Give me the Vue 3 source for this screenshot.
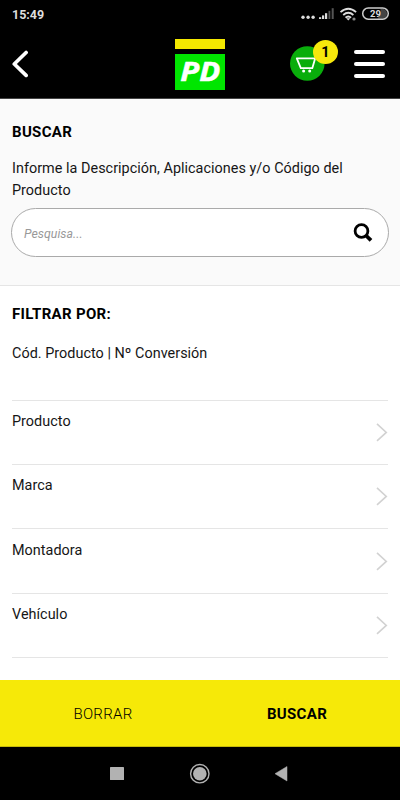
<script setup>
const filters = ['Producto', 'Marca', 'Montadora', 'Vehículo']
</script>

<template>
  <div class="screen">
    <div class="status">
      <span class="time">15:49</span>
      <svg class="indicators" width="92" height="20" viewBox="0 0 92 20">
        <g fill="#ddd">
          <circle cx="3" cy="11.3" r="1.7" /><circle cx="8.1" cy="11.3" r="1.7" /><circle cx="13.1" cy="11.3" r="1.7" />
          <rect x="19" y="11.2" width="2.2" height="1.8" /><rect x="22" y="9.4" width="2.2" height="3.6" />
          <rect x="25" y="7.2" width="2.2" height="5.8" />
        </g>
        <g fill="#555"><rect x="28.5" y="4.8" width="1.8" height="8.2" /><rect x="31.7" y="2.2" width="2" height="10.8" /></g>
        <g fill="none" stroke="#ddd" stroke-width="1.8">
          <path d="M40.5 6.2Q48.3-.8 56.1 6.2" /><path d="M43.2 9Q48.3 4.6 53.4 9" /><path d="M45.5 11.7Q48.3 9.2 51.1 11.7" />
        </g>
        <path d="M46.2 12.2H50.4L48.3 14.6Z" fill="#ddd" />
        <circle cx="54" cy="13" r="1.6" fill="#888" />
        <path d="M80.5 2.7H82A5 5 0 0 1 82 12.7H77.5Q81 8 80.5 2.7Z" fill="#444" />
        <rect x="62.7" y="2" width="25.6" height="11.2" rx="5.6" fill="none" stroke="#ccc" stroke-width="1.5" />
        <text x="75.5" y="11.2" text-anchor="middle" class="battery">29</text>
      </svg>
    </div>
    <header class="header">
      <svg class="back" width="18" height="30" viewBox="0 0 18 30"><path d="M14.1 3.5L2.3 15L14.1 26.4" fill="none" stroke="#fff" stroke-width="3.7" stroke-linecap="round" stroke-linejoin="round" /></svg>
      <div class="logo"><div class="logo-bar"></div><div class="logo-box"><svg width="50" height="36" viewBox="0 0 50 36"><text x="5.2" y="27" textLength="40" lengthAdjust="spacingAndGlyphs" class="logo-text">PD</text></svg></div></div>
      <div class="cart">
        <svg width="35" height="35" viewBox="0 0 35 35">
          <circle cx="17.3" cy="17.5" r="17.3" fill="#09ad0b" />
          <path d="M6.8 12.4H23.5M6.8 12.4L10.8 22.2H22.3L25.7 10.5H28" fill="none" stroke="#fff" stroke-width="1.8" stroke-linejoin="round" stroke-linecap="round" />
          <circle cx="13.6" cy="25" r="1.5" fill="#fff" /><circle cx="19.7" cy="25" r="1.5" fill="#fff" />
        </svg>
        <span class="badge">1</span>
      </div>
      <div class="burger"><i></i><i></i><i></i></div>
    </header>
    <section class="search">
      <h2>BUSCAR</h2>
      <p>Informe la Descripción, Aplicaciones y/o Código del Producto</p>
      <div class="field">
        <span class="placeholder">Pesquisa...</span>
        <svg width="20" height="20" viewBox="0 0 20 20" fill="none" stroke="#000"><circle cx="8.5" cy="8" r="6.4" stroke-width="2.8" /><path d="M13 12.5L18 17.3" stroke-width="3.8" /></svg>
      </div>
    </section>
    <main class="filters">
      <h2>FILTRAR POR:</h2>
      <div class="code">Cód. Producto | Nº Conversión</div>
      <div v-for="name in filters" :key="name" class="row">
        <span>{{ name }}</span>
        <svg width="12" height="20" viewBox="0 0 12 20"><path d="M1 1.8L10.3 10.4L1 18.8" fill="none" stroke="#d2d2d2" stroke-width="1.6" /></svg>
      </div>
      <div class="end"></div>
    </main>
    <div class="actions"><span class="clear">BORRAR</span><span class="submit">BUSCAR</span></div>
    <nav class="nav">
      <svg width="400" height="53" viewBox="0 0 400 53" fill="#b2b2b2">
        <rect x="110" y="20" width="14" height="13" rx=".6" />
        <circle cx="199.8" cy="26.7" r="9.2" fill="none" stroke="#b2b2b2" stroke-width="1.4" /><circle cx="199.8" cy="26.7" r="6.8" />
        <path d="M275 26.7L287 19.5V34Z" stroke="#b2b2b2" stroke-width=".5" stroke-linejoin="round" />
      </svg>
    </nav>
  </div>
</template>

<style>
body { margin: 0; background: #000; }
</style>
<style scoped>
* { box-sizing: border-box; }
svg { display: block; flex: none; }
.screen { width: 400px; height: 800px; display: flex; flex-direction: column; overflow: hidden; background: #fff; color: #161616; font-family: Roboto, sans-serif; font-size: 14.4px; letter-spacing: .03px; }
.status { height: 28px; flex: none; background: #000; display: flex; justify-content: space-between; padding: 6px 8px 0 12px; color: #ddd; }
.time { font-size: 12.5px; font-weight: 700; line-height: 17px; letter-spacing: 0; }
.battery { font: 700 9.5px Roboto, sans-serif; fill: #ddd; }
.header { height: 71px; flex: none; background: #000; display: flex; border-bottom: 1px solid #444; padding-left: 12px; }
.back { margin-top: 20.5px; }
.logo { width: 50px; margin: 11px 0 0 145px; height: 51px; }
.logo-bar { height: 10px; background: #f4e800; margin-bottom: 5px; }
.logo-box { height: 36px; background: #00e600; }
.logo-text { font: italic 700 26.5px "Open Sans", sans-serif; letter-spacing: 0; fill: #fff; stroke: #fff; stroke-width: .5px; }
.cart { position: relative; width: 35px; height: 35px; margin: 18px 0 0 65px; }
.badge { position: absolute; left: 23px; top: -6px; width: 25px; height: 24px; border-radius: 50%; background: #f7e80c; color: #000; text-align: center; line-height: 25px; font-weight: 700; font-size: 14.5px; }
.burger { width: 31px; margin: 22px 0 0 29px; display: flex; flex-direction: column; gap: 7.8px; }
.burger i { height: 4px; border-radius: 2px; background: #fff; }
.search { height: 187px; flex: none; background: #fafafa; border-bottom: 1px solid #e5e5e5; padding: 22px 11px 0 12px; }
h2 { margin: 0; font-size: 15px; font-weight: 700; line-height: 22px; color: #000; letter-spacing: .32px; }
p { margin: 14.5px 0 0; line-height: 22px; }
.field { margin: 6.5px 0 0 -1px; height: 49px; border: 1px solid #aaa; border-radius: 25px; background: #fff; display: flex; align-items: center; justify-content: space-between; padding: 0 15px 0 12px; }
.placeholder { font-size: 12.3px; font-style: italic; color: #999; padding-top: 2px; }
.filters { flex: 1; padding: 17px 12px 0; }
.code { height: 74.6px; padding-top: 17.5px; line-height: 22px; }
.row { height: 64.4px; border-top: 1.3px solid #e5e5e5; display: flex; justify-content: space-between; line-height: 22px; padding-top: 10.5px; }
.row svg { margin-top: 11px; }
.end { border-top: 1.3px solid #e5e5e5; }
.actions { height: 67px; flex: none; background: #f6e908; border-bottom: 1px solid #c6bb0a; display: flex; align-items: center; text-align: center; padding: 2px 6px 0; color: #000; }
.actions span { flex: 1; font-size: 15px; letter-spacing: .32px; }
.clear { font-weight: 300; }
.submit { font-weight: 700; }
.nav { height: 53px; flex: none; background: #000; }
</style>
